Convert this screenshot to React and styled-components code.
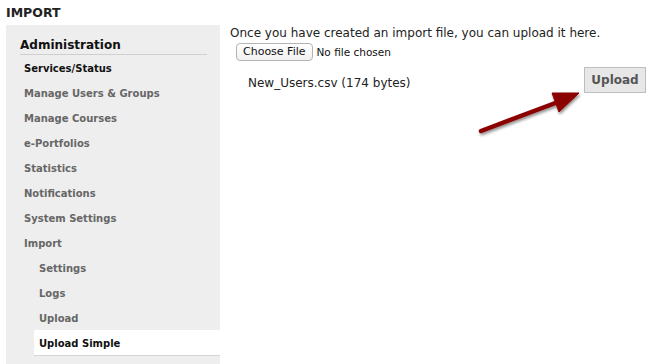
import styled, { createGlobalStyle } from 'styled-components';

const GlobalStyle = createGlobalStyle`
  body {
    margin: 0;
    background: #fff;
    font-family: "DejaVu Sans", Verdana, sans-serif;
  }
`;

const Page = styled.div`
  position: relative;
  width: 653px;
  height: 364px;
  overflow: hidden;
`;

const PageTitle = styled.h1`
  margin: 0;
  padding: 5px 0 0 6px;
  height: 25px;
  box-sizing: border-box;
  font-size: 12.5px;
  line-height: 15px;
  font-weight: bold;
  color: #222;
`;

const Layout = styled.div`
  display: flex;
  padding-left: 6px;
`;

const Sidebar = styled.nav`
  width: 214px;
  height: 339px;
  background: #eeeeee;
  padding-top: 12px;
  box-sizing: border-box;
`;

const SideHeading = styled.h2`
  margin: 0 13px 0 14px;
  font-size: 12px;
  line-height: 17px;
  font-weight: bold;
  color: #111;
  border-bottom: 1px solid #cfcfcf;
`;

const MenuList = styled.ul`
  list-style: none;
  margin: 0;
  padding: 0;
`;

const SubList = styled(MenuList)`
  margin-left: 28px;
`;

const MenuItem = styled.li`
  height: 25px;
  line-height: 27px;
  padding-left: ${p => (p.$sub ? '5px' : '18px')};
  font-size: 10px;
  font-weight: bold;
  color: ${p => (p.$active ? '#111' : '#666')};
  background: ${p => (p.$selected ? '#fff' : 'transparent')};
  box-shadow: ${p => (p.$selected ? '0 1px 0 #d6d6d6' : 'none')};
  white-space: nowrap;
`;

const Content = styled.main`
  flex: 1;
  padding-left: 10px;
`;

const Intro = styled.p`
  margin: 0;
  font-size: 12px;
  line-height: 16px;
  color: #222;
`;

const FileRow = styled.div`
  display: flex;
  align-items: center;
  gap: 4px;
  margin: 2px 0 0 6px;
  height: 18px;
`;

const ChooseButton = styled.button`
  height: 18px;
  padding: 0 6px;
  box-sizing: border-box;
  border: 1px solid #b4b4b4;
  border-radius: 4px;
  background: linear-gradient(#ffffff, #f1f1f1);
  font-family: "DejaVu Sans", sans-serif;
  font-size: 11px;
  line-height: 16px;
  color: #111;
`;

const NoFile = styled.span`
  font-size: 10.5px;
  color: #111;
`;

const UploadRow = styled.div`
  display: flex;
  align-items: center;
  justify-content: space-between;
  margin: 6px 7px 0 18px;
  height: 26px;
`;

const FileName = styled.span`
  font-size: 12px;
  color: #222;
  padding-top: 5px;
`;

const UploadButton = styled.button`
  width: 62px;
  height: 26px;
  border: 1px solid #bdbdbd;
  background: #e7e7e7;
  font-family: "DejaVu Sans", sans-serif;
  font-size: 12px;
  font-weight: bold;
  color: #555;
  padding: 0;
`;

const Arrow = styled.svg`
  position: absolute;
  left: 470px;
  top: 80px;
  overflow: visible;
`;

const mainItems = [
  'Manage Users & Groups',
  'Manage Courses',
  'e-Portfolios',
  'Statistics',
  'Notifications',
  'System Settings',
  'Import',
];

const subItems = ['Settings', 'Logs', 'Upload'];

export default function App() {
  return (
    <Page>
      <GlobalStyle />
      <PageTitle>IMPORT</PageTitle>
      <Layout>
        <Sidebar>
          <SideHeading>Administration</SideHeading>
          <MenuList>
            <MenuItem $active>Services/Status</MenuItem>
            {mainItems.map(item => (
              <MenuItem key={item}>{item}</MenuItem>
            ))}
          </MenuList>
          <SubList>
            {subItems.map(item => (
              <MenuItem key={item} $sub>{item}</MenuItem>
            ))}
            <MenuItem $sub $active $selected>Upload Simple</MenuItem>
          </SubList>
        </Sidebar>
        <Content>
          <Intro>Once you have created an import file, you can upload it here.</Intro>
          <FileRow>
            <ChooseButton type="button">Choose File</ChooseButton>
            <NoFile>No file chosen</NoFile>
          </FileRow>
          <UploadRow>
            <FileName>New_Users.csv (174 bytes)</FileName>
            <UploadButton type="button">Upload</UploadButton>
          </UploadRow>
        </Content>
      </Layout>
      <Arrow width="120" height="60" viewBox="0 0 120 60">
        <defs>
          <filter id="shadow" x="-20%" y="-40%" width="140%" height="180%">
            <feDropShadow dx="1" dy="2" stdDeviation="1.5" floodColor="#000" floodOpacity="0.45" />
          </filter>
        </defs>
        <g filter="url(#shadow)" fill="#8b0000" stroke="#8b0000">
          <line x1="11" y1="51" x2="88" y2="22" strokeWidth="4.5" strokeLinecap="round" />
          <polygon points="109,13 82,13 89,32" strokeWidth="1" strokeLinejoin="round" />
        </g>
      </Arrow>
    </Page>
  );
}
